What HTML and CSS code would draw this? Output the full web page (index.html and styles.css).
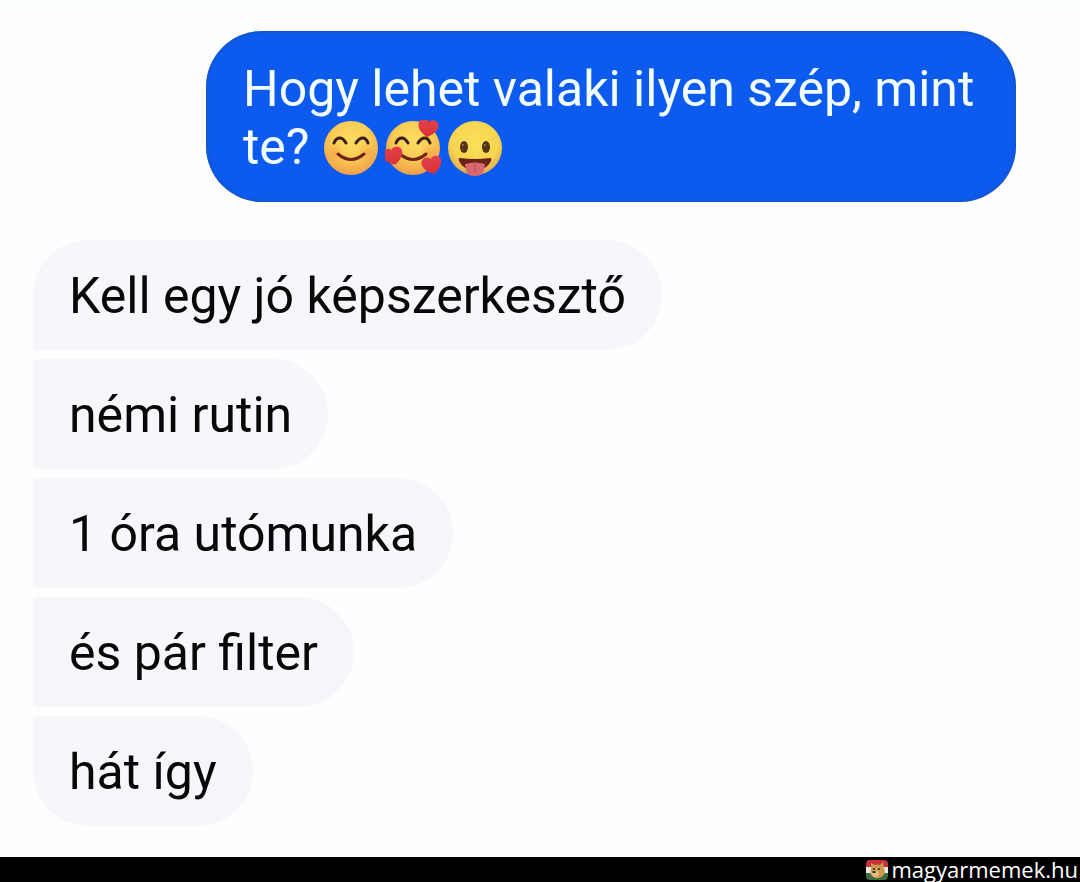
FILE: index.html
```html
<!DOCTYPE html>
<html lang="hu">
<head>
<meta charset="utf-8">
<title>magyarmemek.hu</title>
<meta name="viewport" content="width=device-width, initial-scale=1">
<link rel="stylesheet" href="styles.css">
</head>
<body>
<svg class="defs" aria-hidden="true">
  <defs>
    <radialGradient id="skin" cx="50%" cy="35%" r="66%">
      <stop offset="0" stop-color="#fbdc60"/>
      <stop offset="0.55" stop-color="#f9cb55"/>
      <stop offset="1" stop-color="#ef9c48"/>
    </radialGradient>
    <radialGradient id="lemon" cx="50%" cy="38%" r="62%">
      <stop offset="0" stop-color="#fbe05a"/>
      <stop offset="0.7" stop-color="#f6d450"/>
      <stop offset="1" stop-color="#dfaa50"/>
    </radialGradient>
    <radialGradient id="blush" cx="50%" cy="50%" r="50%">
      <stop offset="0" stop-color="#f5823c" stop-opacity="0.4"/>
      <stop offset="1" stop-color="#f5823c" stop-opacity="0"/>
    </radialGradient>
    <linearGradient id="heart-fill" x1="0" y1="0" x2="0" y2="1">
      <stop offset="0" stop-color="#e2404a"/>
      <stop offset="1" stop-color="#d93238"/>
    </linearGradient>
    <path id="heart" fill="url(#heart-fill)" d="M0 9C-4 7-10 3-10-3C-10-9-2-10 0-6C2-10 10-9 10-3C10 3 4 7 0 9Z"/>
    <g id="smile" fill="none" stroke="#3a1f18" stroke-linecap="round" stroke-linejoin="round">
      <path stroke-width="3" d="M11 23Q13 18 17 18Q20 18 23 23M33 23Q36 18 40 18Q43 18 45 23"/>
      <path stroke="#6b2417" stroke-width="3" d="M15 34Q28 45 41 34"/>
    </g>
  </defs>
</svg>
<main class="chat">
  <p class="bubble sent">Hogy lehet valaki ilyen szép, mint te? <span class="emojis">
    <svg class="emoji" viewBox="0 0 56 56" role="img" aria-label="😊">
      <circle cx="28" cy="28" r="27" fill="url(#skin)"/>
      <circle cx="12" cy="33" r="9" fill="url(#blush)"/>
      <circle cx="44" cy="33" r="9" fill="url(#blush)"/>
      <use href="#smile"/>
    </svg>
    <svg class="emoji" viewBox="0 0 56 56" role="img" aria-label="🥰">
      <circle cx="28" cy="28" r="27" fill="url(#skin)"/>
      <circle cx="44" cy="33" r="9" fill="url(#blush)"/>
      <use href="#smile"/>
      <use href="#heart" transform="translate(43 8) rotate(8)"/>
      <use href="#heart" transform="translate(8 36) rotate(-14)"/>
      <use href="#heart" transform="translate(47 45) rotate(-12)"/>
    </svg>
    <svg class="emoji" viewBox="0 0 56 56" role="img" aria-label="😛">
      <circle cx="28" cy="28" r="27" fill="url(#lemon)"/>
      <ellipse cx="17" cy="27" rx="4" ry="6" fill="#543215"/>
      <ellipse cx="39" cy="27" rx="4" ry="6" fill="#543215"/>
      <circle cx="16" cy="25" r="1" fill="#a07a4a"/>
      <circle cx="38" cy="25" r="1" fill="#a07a4a"/>
      <path fill="#6b2018" d="M13 38Q28 40 43 38Q45 38 44 41Q40 50 28 50Q16 50 12 41Q11 38 13 38Z"/>
      <path fill="#d9686c" d="M18 44Q28 41 38 44L37 50Q36 56 28 56Q20 56 19 50Z"/>
      <path fill="none" stroke="#b94a55" stroke-width="1" stroke-linecap="round" d="M28 45V52"/>
    </svg></span></p>
  <div class="received">
    <p class="bubble reply first">Kell egy jó képszerkesztő</p>
    <p class="bubble reply">némi rutin</p>
    <p class="bubble reply">1 óra utómunka</p>
    <p class="bubble reply">és pár filter</p>
    <p class="bubble reply last">hát így</p>
  </div>
</main>
<footer class="credit">
  <svg class="logo" viewBox="0 0 22 20" aria-hidden="true">
    <clipPath id="tile"><rect width="22" height="20" rx="4"/></clipPath>
    <g clip-path="url(#tile)">
      <rect width="22" height="7" fill="#c8323a"/>
      <rect y="7" width="22" height="6" fill="#efeae2"/>
      <rect y="13" width="22" height="7" fill="#3c6b3e"/>
      <path fill="#c99a50" d="M5 3L9 5Q12 4 14 5L17 2L18 8Q20 12 17 16Q12 20 7 17Q3 14 5 9Z"/>
      <path fill="#e0c084" d="M5 12Q7 9 11 11Q14 13 12 16Q8 18 6 15Z"/>
      <circle cx="8" cy="9" r="1" fill="#3a2515"/>
      <circle cx="13" cy="9" r="1" fill="#3a2515"/>
      <ellipse cx="8" cy="12" rx="2" ry="1" fill="#3a2515"/>
    </g>
  </svg>
  <span>magyarmemek.hu</span>
</footer>
</body>
</html>
```
FILE: styles.css
```css
* {
  box-sizing: border-box;
}

body {
  margin: 0;
  min-height: 100vh;
  display: flex;
  flex-direction: column;
  background: #fefefe;
  font-family: Roboto, "Liberation Sans", sans-serif;
}

.defs {
  position: absolute;
  width: 0;
  height: 0;
}

.chat {
  flex: 1;
  display: flex;
  flex-direction: column;
  gap: 38px;
  padding: 31px 64px 30px 33px;
  background: linear-gradient(#fafdfe, #fefefe 16px);
}

.bubble {
  margin: 0;
  font-size: 50px;
  line-height: 58px;
}

.sent {
  align-self: flex-end;
  max-width: 810px;
  padding: 29px 37px 26px;
  border-radius: 56px;
  background: #0d5bee;
  box-shadow: inset 0 0 4px #1a4fa8;
  color: #f2fdff;
}

.emojis {
  display: inline-flex;
  gap: 6px;
  margin: -8px 0 -8px 1px;
  vertical-align: -12px;
}

.emoji {
  width: 56px;
  height: 56px;
}

.received {
  display: flex;
  flex-direction: column;
  align-items: flex-start;
  gap: 9px;
}

.reply {
  padding: 27px 36px 25px;
  border-radius: 4px 55px 55px 4px;
  background: #f5f7fa;
  color: #080808;
}

.first {
  border-top-left-radius: 55px;
}

.last {
  border-bottom-left-radius: 55px;
}

.credit {
  display: flex;
  justify-content: flex-end;
  align-items: center;
  gap: 3px;
  height: 25px;
  padding-right: 2px;
  background: #000;
  color: #fff;
  font: 22px/25px "Open Sans", "Noto Sans", sans-serif;
}

.logo {
  width: 22px;
  height: 20px;
}
```
